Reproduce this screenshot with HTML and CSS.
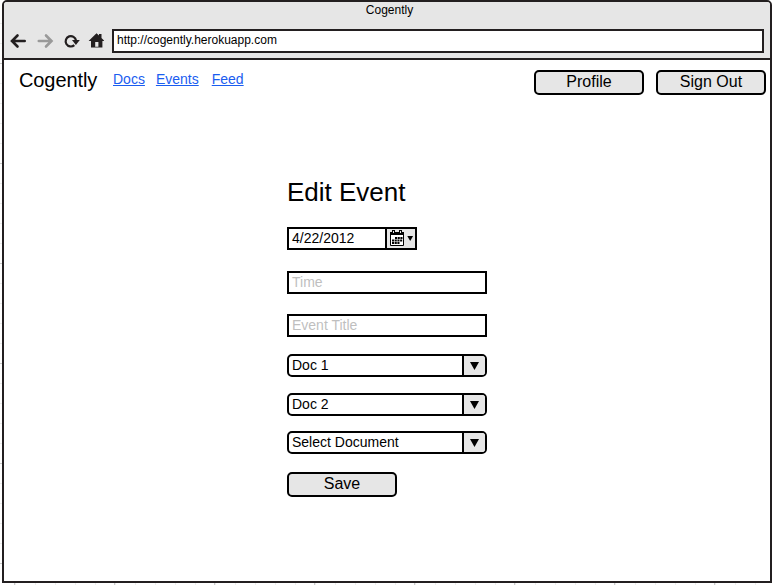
FILE: index.html
```html
<!DOCTYPE html>
<html lang="en">
<head>
<meta charset="utf-8">
<title>Cogently</title>
<link rel="stylesheet" href="styles.css">
</head>
<body>
<div class="window">
  <header class="chrome">
    <div class="title">Cogently</div>
    <div class="toolbar">
      <svg class="tools" width="100" height="20" viewBox="0 0 100 20">
        <path class="stroke" d="M20.700 10H8.500M13.500 4.500L8 10l5.500 5.500"/>
        <path class="stroke faded" d="M34.800 10H47M42 4.500L47.500 10 42 15.500"/>
        <path class="reload" d="M70.300 14.200A5.200 5.200 0 1 1 72 9.500"/>
        <path class="solid" d="M68 9h7.800l-3.900 5z"/>
        <path class="solid" d="M84.600 10L92.500 2.200l2.500 2.400V3h2.500v4l2.900 3h-2v6.500H87V10z"/>
        <path class="door" d="M91.200 11h3.200v4.700h-3.200z"/>
      </svg>
      <div class="address">http://cogently.herokuapp.com</div>
    </div>
  </header>
  <nav class="nav">
    <span class="brand">Cogently</span>
    <a class="link" href="#">Docs</a>
    <a class="link events" href="#">Events</a>
    <a class="link" href="#">Feed</a>
    <button class="button push">Profile</button>
    <button class="button">Sign Out</button>
  </nav>
  <main class="form">
    <h1 class="heading">Edit Event</h1>
    <div class="field date">
      <span class="value">4/22/2012</span>
      <span class="picker">
        <svg width="28" height="19" viewBox="0 0 28 19">
          <path class="cal" d="M3.500 3.500h13v13h-13z"/>
          <path class="glyph" d="M3 3h14v3H3zM5 1h3v3H5zM12 1h3v3h-3z"/>
          <path class="hole" d="M6 2h1v2H6zM13 2h1v2h-1z"/>
          <path class="days" d="M8 9h7.500M5 11.500h10.500M5 14h7.800"/>
          <path class="glyph" d="M20.300 7h5.800l-2.900 5z"/>
        </svg>
      </span>
    </div>
    <div class="field time hint">Time</div>
    <div class="field event hint">Event Title</div>
    <div class="field select first"><span class="value">Doc 1</span><span class="drop"><svg width="21" height="19"><path class="glyph" d="M6 6h9l-4.500 8z"/></svg></span></div>
    <div class="field select second"><span class="value">Doc 2</span><span class="drop"><svg width="21" height="19"><path class="glyph" d="M6 6h9l-4.500 8z"/></svg></span></div>
    <div class="field select third"><span class="value">Select Document</span><span class="drop"><svg width="21" height="19"><path class="glyph" d="M6 6h9l-4.500 8z"/></svg></span></div>
    <button class="button save">Save</button>
  </main>
</div>
</body>
</html>
```
FILE: styles.css
```css
* { box-sizing: border-box; }
body {
  margin: 0;
  height: 585px;
  padding-left: 2px;
  overflow: hidden;
  font-family: "Liberation Sans", Arial, sans-serif;
  color: #000;
  background:
    repeating-linear-gradient(to right, #ccc 0 1px, transparent 1px 100px) 14px 583px / 758px 2px no-repeat,
    repeating-linear-gradient(to right, #eee 0 1px, transparent 1px 20px) 15px 583px / 757px 2px no-repeat,
    repeating-linear-gradient(to bottom, #ccc 0 1px, transparent 1px 100px) 0 63px / 2px 520px no-repeat,
    repeating-linear-gradient(to bottom, #eee 0 1px, transparent 1px 20px) 0 23px / 2px 560px no-repeat,
    #fff;
}
.window {
  width: 770px;
  height: 583px;
  border: 2px solid #231f20;
  border-radius: 5px 5px 0 0;
  background: #fff;
  overflow: hidden;
}
.chrome {
  height: 58px;
  background: #e6e6e6;
  border-bottom: 2px solid #231f20;
}
.title {
  height: 27px;
  padding-top: 1px;
  padding-left: 5px;
  font-size: 12px;
  line-height: 14px;
  text-align: center;
}
.toolbar { display: flex; }
.tools { flex: none; margin: 2px 8px 0 0; }
.address {
  width: 652px;
  height: 24px;
  padding-left: 3px;
  border: 2px solid #231f20;
  background: #fff;
  font-size: 12px;
  line-height: 19px;
}
.stroke { fill: none; stroke: #231f20; stroke-width: 2.6; stroke-linecap: round; }
.faded { stroke: #999; }
.reload { fill: none; stroke: #231f20; stroke-width: 2.2; }
.solid { fill: #231f20; }
.glyph { fill: #000; }
.door, .hole { fill: #e6e6e6; }
.cal { fill: #fff; stroke: #000; }
.days { fill: none; stroke: #000; stroke-width: 1.9; stroke-dasharray: 2.100 .6; }
.nav {
  display: flex;
  height: 35px;
  padding: 10px 4px 0 15px;
}
.brand { width: 94px; font-size: 20px; line-height: 21px; letter-spacing: -.1px; }
.link { margin-right: 11px; font-size: 14px; line-height: 18px; color: #1a5df0; }
.events { margin-right: 13px; }
.button {
  width: 110px;
  height: 25px;
  padding: 0 0 1px;
  border: 2px solid #000;
  border-radius: 5px;
  background: #e6e6e6;
  color: #000;
  font: 16px/18px "Liberation Sans", Arial, sans-serif;
}
.push { margin: 0 12px 0 auto; }
.form { width: 200px; margin-left: 283px; padding-top: 82px; }
.heading { margin: 0 0 20px; font-size: 26px; font-weight: 400; line-height: 30px; }
.field {
  display: flex;
  height: 23px;
  padding-left: 3px;
  border: 2px solid #000;
  background: #fff;
  font-size: 14px;
  line-height: 18px;
}
.value { flex: 1; }
.date { width: 130px; }
.picker, .drop {
  flex: none;
  display: flex;
  border-left: 2px solid #000;
  background: #e6e6e6;
}
.hint { color: #bfbfbf; }
.time { margin-top: 21px; }
.event { margin-top: 20px; }
.select { border-radius: 5px; overflow: hidden; }
.first { margin-top: 17px; }
.second { margin-top: 16px; }
.third { margin-top: 15px; }
.save { display: block; margin-top: 18px; }
```
